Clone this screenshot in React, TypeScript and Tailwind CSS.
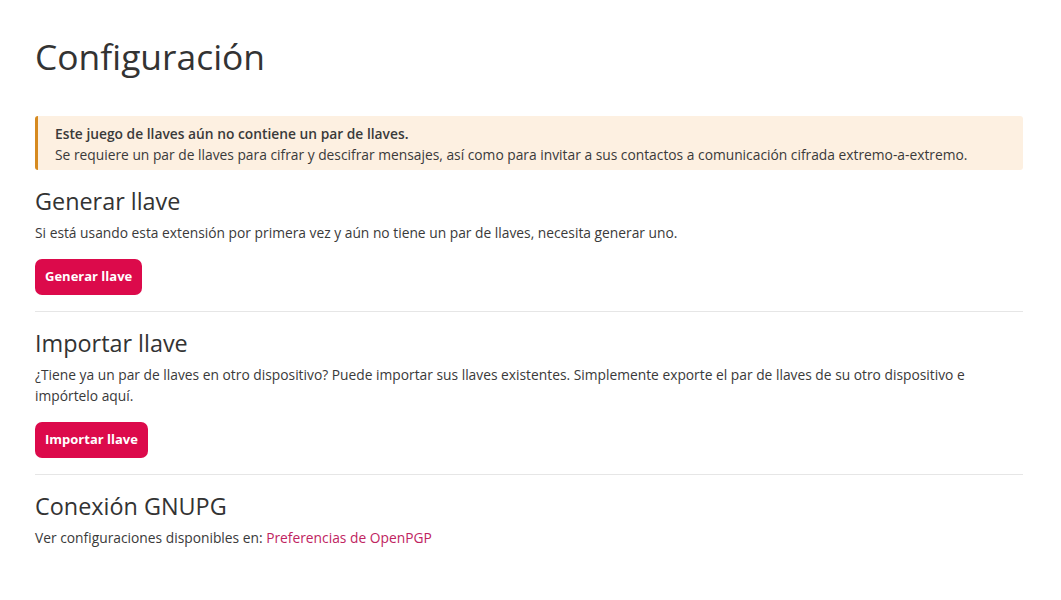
import React from 'react';

// one settings block: heading, description and an optional action
type SectionProps = {
    title: string,
    children: React.ReactNode,
    action?: string,
    divider?: boolean
}

const Section = ({ title, children, action, divider }: SectionProps) => (
    <section className={divider ? 'pt-[17px] pb-[16px] border-b border-[#e6e6e6]' : 'pt-[17px]'}>
        <h2 className="text-[23.4px] leading-[28px] text-[#333333]">{title}</h2>
        <div className="mt-[7px] text-[13.8px] leading-[21px] text-[#3a3a3a]">{children}</div>
        {action && (
            <button className="mt-[16px] h-[36px] px-[10px] rounded-[7px] bg-[#dc0a4b] text-white text-[13px] font-bold">
                {action}
            </button>
        )}
    </section>
);

const App = () => {
    return (
        <div className="min-h-[600px] bg-white pl-[35px] pr-[38px] pt-[34px] font-['Open_Sans',sans-serif] text-[#333333]">
            <h1 className="text-[35.4px] leading-[44px]">Configuración</h1>

            {/* notice about the missing key pair */}
            <div className="mt-[38px] rounded-[3px] border-l-[3px] border-[#d68a1f] bg-[#fdf0e1] pl-[17px] pr-4 pt-[7px] pb-[5px] text-[13.8px] leading-[21px] text-[#3a3a3a]">
                <p className="font-semibold">Este juego de llaves aún no contiene un par de llaves.</p>
                <p>Se requiere un par de llaves para cifrar y descifrar mensajes, así como para invitar a sus contactos a comunicación cifrada extremo-a-extremo.</p>
            </div>

            <Section title="Generar llave" action="Generar llave" divider>
                Si está usando esta extensión por primera vez y aún no tiene un par de llaves, necesita generar uno.
            </Section>

            <Section title="Importar llave" action="Importar llave" divider>
                ¿Tiene ya un par de llaves en otro dispositivo? Puede importar sus llaves existentes. Simplemente exporte el par de llaves de su otro dispositivo e impórtelo aquí.
            </Section>

            <Section title="Conexión GNUPG">
                Ver configuraciones disponibles en: <a href="#" className="text-[#c0245f]">Preferencias de OpenPGP</a>
            </Section>
        </div>
    );
};

export default App;
